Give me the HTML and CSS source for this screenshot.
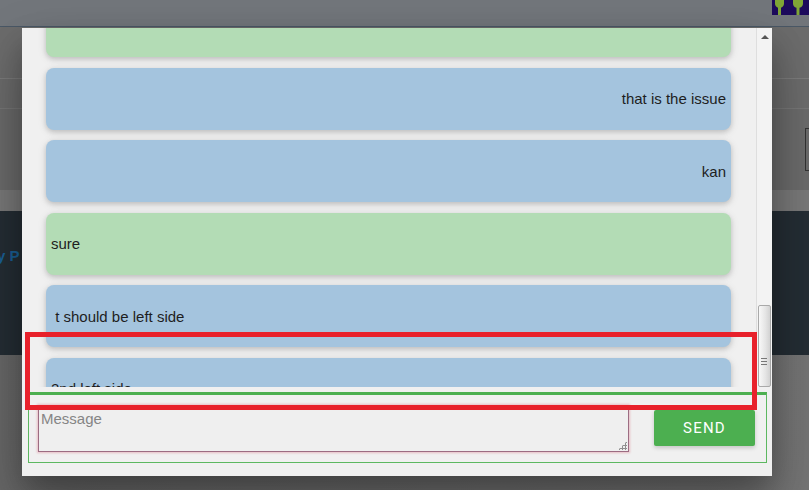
FILE: index.html
```html
<!DOCTYPE html>
<html>
<head>
<meta charset="utf-8">
<link rel="stylesheet" href="styles.css">
</head>
<body>
<div class="page">
  <header class="topbar">
    <div class="logo">
      <svg width="37" height="15" viewBox="0 0 37 15">
        <rect width="37" height="15" fill="#1d0b5c"/>
        <path d="M3 0h9v3.5a4.5 4.5 0 0 1-3 4.2V15h-3V7.7A4.5 4.5 0 0 1 3 3.5z" fill="#7fa636"/>
        <path d="M21 0h10v3.5a4.5 4.5 0 0 1-3.5 4.3V15h-3V7.8A4.5 4.5 0 0 1 21 3.5z" fill="#7fa636"/>
      </svg>
    </div>
  </header>
  <div class="band band-a"></div>
  <div class="band band-b"></div>
  <div class="band band-c"><div class="search-box"></div></div>
  <div class="band band-d"></div>
  <footer class="footer-dark"><span class="footer-link">y P</span></footer>
  <div class="band band-e"></div>
</div>

<div class="modal">
  <div class="chat">
    <div class="list">
      <div class="stack">
        <div class="bubble green"></div>
        <div class="bubble blue right">that is the issue</div>
        <div class="bubble blue right">kan</div>
        <div class="bubble green">sure</div>
        <div class="bubble blue">&nbsp;t should be left side</div>
        <div class="bubble blue">2nd left side</div>
      </div>
    </div>
    <div class="scrollbar">
      <div class="arrow"></div>
      <div class="track"></div>
      <div class="thumb"><span class="grip"></span></div>
    </div>
  </div>
  <form class="composer">
    <div class="field">
      <textarea class="message" placeholder="Message"></textarea>
      <span class="resize"></span>
    </div>
    <button type="button" class="send">SEND</button>
  </form>
</div>

<div class="annotation"></div>
</body>
</html>
```

FILE: styles.css
```css
* { box-sizing: border-box; }
html, body { margin: 0; padding: 0; }
body {
  width: 809px;
  height: 490px;
  overflow: hidden;
  font-family: "Liberation Sans", Arial, sans-serif;
  background: #6e6e6e;
  position: relative;
}

/* background page */
.page { display: flex; flex-direction: column; height: 490px; }
.topbar {
  height: 27px;
  background: #72767b;
  border-bottom: 1px solid #4a5866;
  display: flex;
  justify-content: flex-end;
}
.logo { width: 37px; height: 15px; }
.logo svg { display: block; }
.band-a { height: 51px; background: #6c6c6c; }
.band-b { height: 30px; background: #6b6b6b; border-top: 1px solid #7b7b7b; }
.band-c {
  height: 82px;
  background: #6a6a6a;
  border-top: 1px solid #767676;
  display: flex;
  justify-content: flex-end;
  padding-top: 19px;
}
.search-box {
  width: 4px;
  height: 43px;
  border: 1px solid #333;
  border-right: none;
}
.band-d { height: 21px; background: #787878; }
.footer-dark {
  height: 144px;
  background: #242d34;
  padding-top: 36px;
}
.footer-link {
  display: block;
  margin-left: -3px;
  color: #1a5f94;
  font-weight: bold;
  font-size: 15px;
}
.band-e { flex: 1; background: linear-gradient(90deg, #676767, #747474); }

/* modal */
.modal {
  position: absolute;
  left: 22px;
  top: 28px;
  width: 750px;
  height: 448px;
  background: #f0f0f0;
  display: flex;
  flex-direction: column;
  box-shadow: 0 16px 28px rgba(0,0,0,0.25), 0 25px 55px rgba(0,0,0,0.22);
}
.chat { height: 359px; display: flex; }
.list { flex: 1; overflow: hidden; padding: 0 25px 0 24px; }
.stack {
  margin-top: -33px;
  display: flex;
  flex-direction: column;
  gap: 10.5px;
}
.bubble {
  height: 62px;
  flex: none;
  border-radius: 8px;
  padding: 0 5px;
  display: flex;
  align-items: center;
  font-size: 15px;
  color: #1e1e1e;
  box-shadow: 0 2px 5px rgba(0,0,0,0.14), 0 2px 10px rgba(0,0,0,0.10);
}
.bubble.green { background: #b3dcb5; }
.bubble.blue { background: #a4c4de; }
.bubble.right { justify-content: flex-end; }

.scrollbar {
  width: 16px;
  background: #f3f3f3;
  border-left: 1px solid #dedede;
  display: flex;
  flex-direction: column;
  align-items: center;
}
.arrow {
  margin-top: 7px;
  width: 0;
  height: 0;
  border-left: 4px solid transparent;
  border-right: 4px solid transparent;
  border-bottom: 4px solid #555;
}
.track { flex: 1; }
.thumb {
  width: 13px;
  height: 82px;
  margin-right: 1px;
  border: 1px solid #a9a9a9;
  border-radius: 2px;
  background: linear-gradient(90deg, #f8f8f8, #e4e4e4 60%, #d2d2d2);
  display: flex;
  align-items: center;
  justify-content: center;
}
.grip {
  width: 6px;
  height: 7px;
  border-top: 1px solid #777;
  border-bottom: 1px solid #777;
  background: linear-gradient(#777, #777) center / 6px 1px no-repeat;
  margin-top: 30px;
}

.composer {
  margin: 5px 5px 13px 6px;
  height: 71px;
  border: 1px solid #5cb860;
  border-top: 3px solid #4caf50;
  padding: 10px 11px 10px 9px;
  display: flex;
  justify-content: space-between;
  align-items: flex-start;
}
.field { position: relative; width: 591px; height: 47px; }
.message {
  display: block;
  width: 591px;
  height: 47px;
  resize: none;
  background: #efefef;
  border: 1px solid #9c6c82;
  box-shadow: 0 0 2px 1px rgba(220, 110, 130, 0.4);
  padding: 4px 2px;
  font-family: "Liberation Sans", Arial, sans-serif;
  font-size: 15px;
  outline: none;
}
.message::placeholder { color: #858585; }
.resize {
  position: absolute;
  right: 2px;
  bottom: 2px;
  width: 9px;
  height: 9px;
  background:
    radial-gradient(circle, #8f8f8f 1px, transparent 1.2px) 0 0 / 3px 3px;
  clip-path: polygon(100% 0, 100% 100%, 0 100%);
}
.send {
  margin-top: 5px;
  width: 101px;
  height: 36px;
  border: none;
  border-radius: 2px;
  background: #4caf50;
  color: #fff;
  font-family: Roboto, "Liberation Sans", sans-serif;
  font-size: 15px;
  letter-spacing: 1.2px;
  box-shadow: 0 2px 4px rgba(0,0,0,0.18);
  padding: 0;
}

/* annotation overlay */
.annotation {
  position: absolute;
  left: 25px;
  top: 332px;
  width: 732px;
  height: 78px;
  border: 5px solid #e8212b;
}
```
